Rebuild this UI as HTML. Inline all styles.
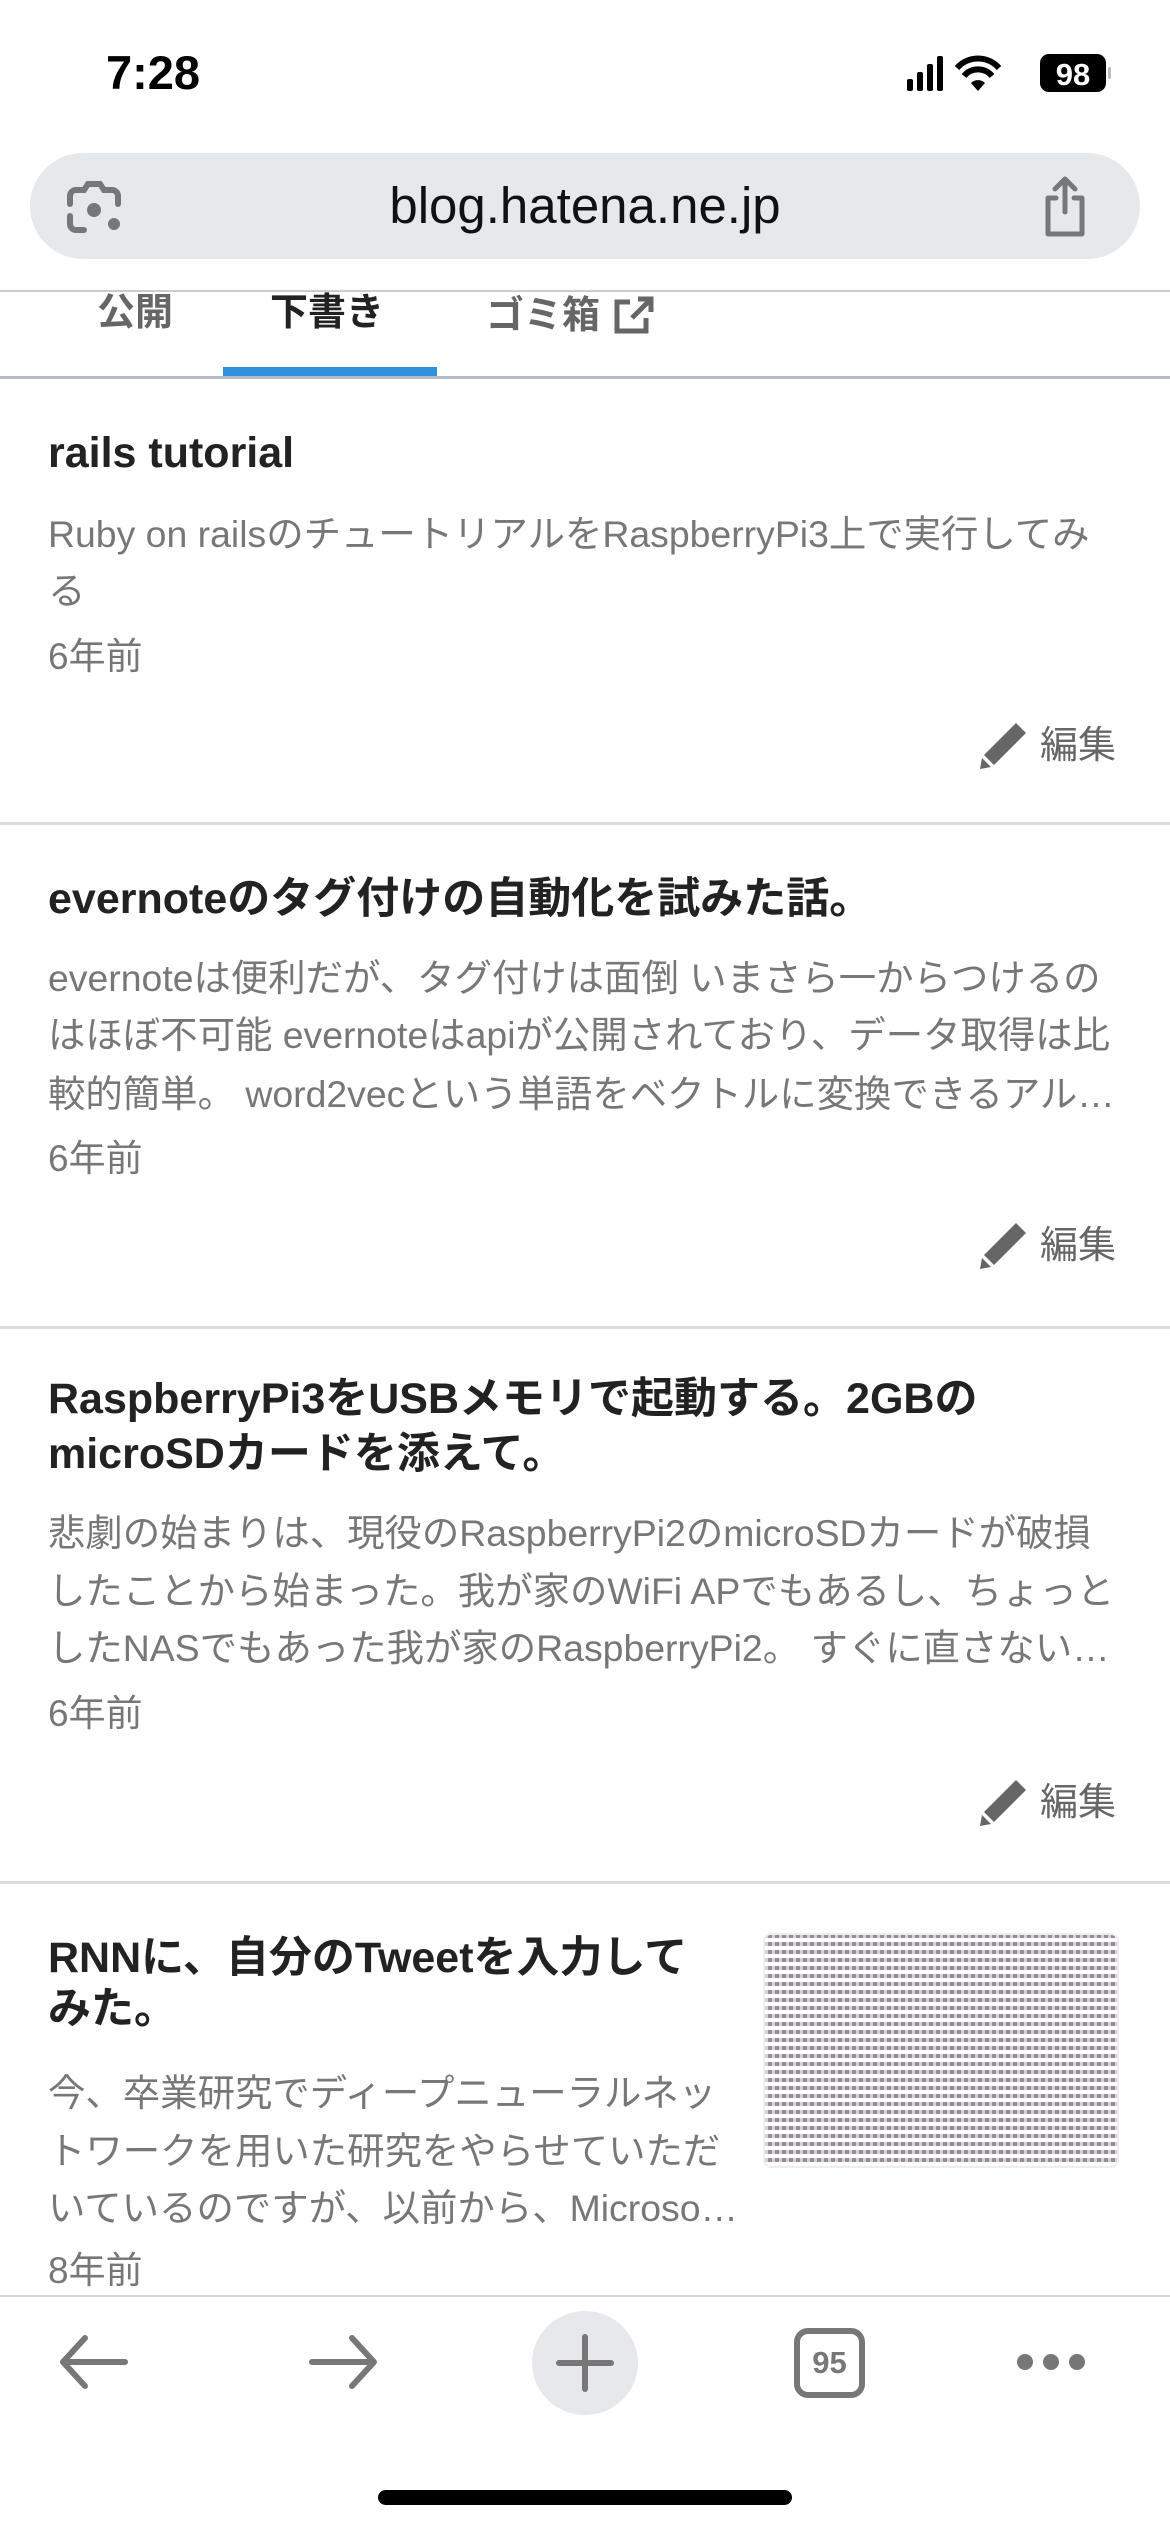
<!DOCTYPE html>
<html><head><meta charset="utf-8"><style>
*{margin:0;padding:0;box-sizing:border-box}
body{width:1170px;height:2532px;background:#fff;position:relative;overflow:hidden;font-family:"Liberation Sans","Noto Sans CJK JP",sans-serif}
.a{position:absolute;white-space:nowrap}
.t{font-weight:bold;font-size:43px;color:#222;line-height:56px;left:48px}
.d{font-size:37.4px;color:#777;line-height:58px;left:48px}
.ago{font-size:37px;color:#777;line-height:50px;left:48px}
.sep{position:absolute;left:0;width:1170px;height:3px;background:#d9dde1}
.ed{position:absolute;left:978px;font-size:38px;color:#666;line-height:50px;display:flex;align-items:center;gap:12px}
</style></head><body>
<div class="a" style="left:106px;top:46px;font-size:47px;font-weight:bold;line-height:54px;color:#000">7:28</div>
<svg class="a" style="left:905px;top:52px" width="260" height="42" viewBox="0 0 260 42">
<rect x="2" y="27" width="6" height="12" rx="2"/><rect x="12" y="20" width="6" height="19" rx="2"/><rect x="22" y="12" width="6" height="27" rx="2"/><rect x="32" y="4" width="6" height="35" rx="2"/>
<path d="M52 16 A28 28 0 0 1 94 16" stroke="#000" stroke-width="6" fill="none"/><path d="M59 24 A18 18 0 0 1 87 24" stroke="#000" stroke-width="6" fill="none"/><path d="M66 31 L73 39 L80 31 A10 10 0 0 0 66 31Z"/>
<rect x="135" y="2" width="66" height="38" rx="9"/><rect x="203" y="15" width="3" height="12" rx="1.5" fill="#bbb"/>
<text x="168" y="33" font-size="31" font-weight="bold" fill="#fff" text-anchor="middle" font-family="Liberation Sans">98</text></svg>
<div class="a" style="left:30px;top:153px;width:1110px;height:106px;border-radius:53px;background:#e6e9ec"></div>
<svg class="a" style="left:64px;top:178px" width="60" height="60" viewBox="0 0 60 60" fill="none" stroke="#777" stroke-width="6" stroke-linecap="round"><path d="M6 26 V18 a6 6 0 0 1 6-6 H20 l4-6 h12 l4 6 h8 a6 6 0 0 1 6 6 V26"/><path d="M6 38 V46 a6 6 0 0 0 6 6 H20"/><circle cx="30" cy="32" r="4" fill="#777"/><circle cx="50" cy="46" r="3" fill="#777"/></svg>
<div class="a" style="left:0;width:1170px;top:176px;text-align:center;font-size:51px;line-height:60px;color:#111">blog.hatena.ne.jp</div>
<svg class="a" style="left:1040px;top:176px" width="50" height="62" viewBox="0 0 50 62" fill="none" stroke="#777" stroke-width="5" stroke-linecap="round" stroke-linejoin="round"><path d="M16 22 H8 V58 H42 V22 H34"/><path d="M25 36 V4 M15 13 L25 3 L35 13"/></svg>
<div class="sep" style="top:290px;height:2px;background:#ccc"></div>
<div class="a" style="left:97px;top:290px;font-size:38px;font-weight:bold;color:#666;line-height:46px">公開</div>
<div class="a" style="left:270px;top:290px;font-size:38px;font-weight:bold;color:#222;line-height:46px">下書き</div>
<div class="a" style="left:486px;top:293px;font-size:38px;font-weight:bold;color:#666;line-height:46px">ゴミ箱</div>
<svg class="a" style="left:612px;top:296px" width="42" height="40" viewBox="0 0 42 40" fill="none" stroke="#666" stroke-width="5"><path d="M18 6 H5 V35 H34 V22"/><path d="M20 22 L38 4 M26 3 H39 V16"/></svg>
<div class="a" style="left:223px;top:367px;width:214px;height:9px;background:#2e93dc"></div>
<div class="sep" style="top:376px;height:3px;background:#b4bcc4"></div>

<div class="a t" style="top:425px">rails tutorial</div>
<div class="a d" style="top:505px">Ruby on railsのチュートリアルをRaspberryPi3上で実行してみ</div>
<div class="a d" style="top:562px">る</div>
<div class="a ago" style="top:632px">6年前</div>
<div class="ed" style="top:721px"><svg width="50" height="50" viewBox="0 0 50 50"><path d="M38 2 L48 12 L16 44 L6 34Z M4 37 L13 46 L2 48Z" fill="#666"/></svg>編集</div>
<div class="sep" style="top:822px"></div>

<div class="a t" style="top:871px">evernoteのタグ付けの自動化を試みた話。</div>
<div class="a d" style="top:949px">evernoteは便利だが、タグ付けは面倒 いまさら一からつけるの</div>
<div class="a d" style="top:1006px">はほぼ不可能 evernoteはapiが公開されており、データ取得は比</div>
<div class="a d" style="top:1065px">較的簡単。 word2vecという単語をベクトルに変換できるアル…</div>
<div class="a ago" style="top:1134px">6年前</div>
<div class="ed" style="top:1221px"><svg width="50" height="50" viewBox="0 0 50 50"><path d="M38 2 L48 12 L16 44 L6 34Z M4 37 L13 46 L2 48Z" fill="#666"/></svg>編集</div>
<div class="sep" style="top:1326px"></div>

<div class="a t" style="top:1371px">RaspberryPi3をUSBメモリで起動する。2GBの</div>
<div class="a t" style="top:1426px">microSDカードを添えて。</div>
<div class="a d" style="top:1504px">悲劇の始まりは、現役のRaspberryPi2のmicroSDカードが破損</div>
<div class="a d" style="top:1562px">したことから始まった。我が家のWiFi APでもあるし、ちょっと</div>
<div class="a d" style="top:1619px">したNASでもあった我が家のRaspberryPi2。 すぐに直さない…</div>
<div class="a ago" style="top:1689px">6年前</div>
<div class="ed" style="top:1778px"><svg width="50" height="50" viewBox="0 0 50 50"><path d="M38 2 L48 12 L16 44 L6 34Z M4 37 L13 46 L2 48Z" fill="#666"/></svg>編集</div>
<div class="sep" style="top:1881px"></div>

<div class="a t" style="top:1930px">RNNに、自分のTweetを入力して</div>
<div class="a t" style="top:1981px">みた。</div>
<div class="a d" style="top:2064px">今、卒業研究でディープニューラルネッ</div>
<div class="a d" style="top:2122px">トワークを用いた研究をやらせていただ</div>
<div class="a d" style="top:2179px">いているのですが、以前から、Microso…</div>
<div class="a ago" style="top:2246px">8年前</div>
<div class="a" style="left:763px;top:1933px;width:356px;height:235px;border-radius:8px;border:2px solid #eee;background:repeating-linear-gradient(0deg,#fff 0 4px,#9a8a95 4px 8px),#b0a2ab"></div>
<div class="a" style="left:765px;top:1935px;width:352px;height:231px;border-radius:6px;background:repeating-linear-gradient(90deg,rgba(255,255,255,.6) 0 3px,transparent 3px 7px)"></div>

<div class="a" style="left:0;top:2295px;width:1170px;height:237px;background:#fff;border-top:2px solid #d6d6d6"></div>
<svg class="a" style="left:55px;top:2330px" width="80" height="64" viewBox="0 0 80 64" fill="none" stroke="#777" stroke-width="6" stroke-linecap="round" stroke-linejoin="round"><path d="M70 32 H10 M30 8 L8 32 L30 56"/></svg>
<svg class="a" style="left:302px;top:2330px" width="80" height="64" viewBox="0 0 80 64" fill="none" stroke="#777" stroke-width="6" stroke-linecap="round" stroke-linejoin="round"><path d="M10 32 H70 M50 8 L72 32 L50 56"/></svg>
<div class="a" style="left:532px;top:2311px;width:106px;height:104px;border-radius:50%;background:#e6e8eb"></div>
<svg class="a" style="left:555px;top:2333px" width="60" height="60" viewBox="0 0 60 60" stroke="#777" stroke-width="6" stroke-linecap="round"><path d="M30 4 V56 M4 30 H56"/></svg>
<div class="a" style="left:794px;top:2328px;width:71px;height:70px;border:6px solid #777;border-radius:14px;text-align:center;font-size:31px;font-weight:bold;color:#777;line-height:58px">95</div>
<svg class="a" style="left:1015px;top:2350px" width="72" height="24" viewBox="0 0 72 24" fill="#777"><circle cx="10" cy="12" r="8"/><circle cx="36" cy="12" r="8"/><circle cx="62" cy="12" r="8"/></svg>
<div class="a" style="left:378px;top:2490px;width:414px;height:15px;border-radius:8px;background:#000"></div>
</body></html>
